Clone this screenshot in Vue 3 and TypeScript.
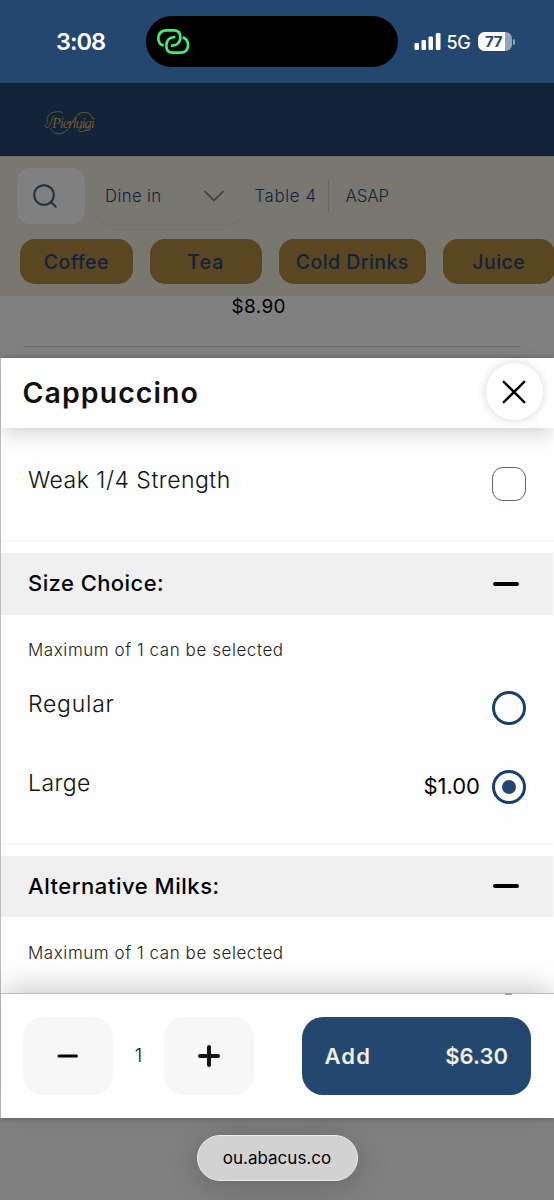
<script setup lang="ts">
import { ref } from 'vue'

interface Option {
  name: string
  price?: string
}

const categories = [
  { label: 'Coffee', cls: 'coffee' },
  { label: 'Tea', cls: 'tea' },
  { label: 'Cold Drinks', cls: 'cold' },
  { label: 'Juice', cls: 'juice' },
]
const sizes: Option[] = [{ name: 'Regular' }, { name: 'Large', price: '$1.00' }]
const selected = ref('Large')
const weak = ref(false)
const quantity = ref(1)
</script>

<template>
  <div class="screen">
    <header class="status">
      <span class="time">3:08</span>
      <div class="island">
        <svg width="34" height="28" viewBox="468 84 102 84" fill="none" stroke="#3df36a" stroke-width="8" stroke-linecap="butt">
          <path d="M491 137C479 134 475 124 475 115C475 100 484 92 498 91H523C536 92 541 101 541 112C541 128 530 138 513 137" />
          <path d="M548 112C560 116 564 126 564 136C564 150 555 158 541 158H516C504 157 499 148 499 137C499 122 508 111 526 111" />
        </svg>
      </div>
      <svg class="signal" width="27" height="18" viewBox="0 0 27 18" fill="#fff">
        <rect x="0.5" y="10" width="4.5" height="7" rx="1.3" />
        <rect x="7.5" y="7" width="4.5" height="10" rx="1.3" />
        <rect x="14.5" y="3.5" width="4.5" height="13.5" rx="1.3" />
        <rect x="21.8" y="0" width="4.7" height="17" rx="1.3" />
      </svg>
      <span class="net">5G</span>
      <div class="battery"><span>77</span></div>
      <i class="nub"></i>
    </header>

    <div class="brand">
      <div class="logo">
        <span>Pierluigi</span>
        <svg class="flourish" width="50" height="26" viewBox="0 0 50 26" fill="none" stroke="#6b5127" stroke-width="1">
          <path d="M10 6C6 12 7 17 3 17.5C0 17.5 1 14 3.5 14M4 13C1 8 5 3 11 2C14 1.4 17 1.5 19 3" />
          <path d="M6 18C9 24 16 26 22 21C29 15 30 3 40 2.3C45 2.3 48 5 48.5 9" />
          <path d="M45 15C44 20 40 22 36 21.5C33 21 34 19 37 18" />
        </svg>
      </div>
    </div>

    <section class="filters">
      <div class="controls">
        <div class="search">
          <svg width="26" height="26" viewBox="0 0 26 26" fill="none" stroke="#262f3f" stroke-width="2" stroke-linecap="round">
            <circle cx="12" cy="12" r="9.8" />
            <path d="M19 19L23.8 23.8" />
          </svg>
        </div>
        <div class="dropdown">
          <span class="t-dine">Dine in</span>
          <svg width="20" height="12" viewBox="0 0 20 12" fill="none" stroke="#444440" stroke-width="1.8" stroke-linecap="round" stroke-linejoin="round">
            <path d="M1 1.5L10 10.5L19 1.5" />
          </svg>
        </div>
        <span class="t-table">Table 4</span>
        <i class="divider"></i>
        <span class="t-asap">ASAP</span>
      </div>
      <nav class="chips">
        <button v-for="c in categories" :key="c.label" class="chip" :class="c.cls"><span>{{ c.label }}</span></button>
      </nav>
    </section>

    <div class="behind">
      <span>$8.90</span>
    </div>

    <main class="sheet">
      <div class="title-bar">
        <h1>Cappuccino</h1>
        <button class="close">
          <svg width="24" height="24" viewBox="0 0 24 24" fill="none" stroke="#000" stroke-width="2.4" stroke-linecap="round">
            <path d="M1.8 1.8L22.2 22.2M22.2 1.8L1.8 22.2" />
          </svg>
        </button>
      </div>

      <div class="scroll">
        <div class="row weak">
          <span class="name t-weak">Weak 1/4 Strength</span>
          <button class="check" @click="weak = !weak"></button>
        </div>
        <div class="band"><span class="t-size">Size Choice:</span><i></i></div>
        <p class="note">Maximum of 1 can be selected</p>
        <div v-for="s in sizes" :key="s.name" class="row size">
          <span class="name" :class="'t-' + s.name.toLowerCase()">{{ s.name }}</span>
          <span v-if="s.price" class="price">{{ s.price }}</span>
          <button class="radio" :class="{ on: selected === s.name }" @click="selected = s.name"></button>
        </div>
        <div class="band second"><span class="t-milk">Alternative Milks:</span><i></i></div>
        <p class="note">Maximum of 1 can be selected</p>
      </div>

      <div class="footer">
        <i class="peek"></i>
        <button class="step" @click="quantity = Math.max(1, quantity - 1)">
          <svg width="24" height="24" viewBox="0 0 24 24" stroke="#000" stroke-width="3" stroke-linecap="round"><path d="M3 12H20.4" /></svg>
        </button>
        <span class="qty">{{ quantity }}</span>
        <button class="step" @click="quantity++">
          <svg width="24" height="24" viewBox="0 0 24 24" stroke="#151515" stroke-width="4" stroke-linecap="round"><path d="M3 12H21M12 3V21" /></svg>
        </button>
        <button class="add"><span class="t-add">Add</span><span class="t-total">$6.30</span></button>
      </div>
    </main>

    <div class="browser"><div class="url"><span>ou.abacus.co</span></div></div>
  </div>
</template>

<style>
html, body { margin: 0; background: #808080; }
</style>

<style scoped>
.screen {
  width: 554px; height: 1200px; overflow: hidden; background: #808080;
  font-family: Inter, "Noto Sans", sans-serif; color: #111;
  display: flex; flex-direction: column;
}
.screen *, .screen { box-sizing: border-box; }
button { border: 0; padding: 0; margin: 0; font: inherit; color: inherit; background: none; flex: none; }
span { white-space: nowrap; }
svg { display: block; flex: none; }

.status { height: 83px; flex: none; background: #23476f; display: flex; align-items: center; color: #fff; }
.time { width: 89.5px; margin-left: 56px; font-size: 23.5px; font-weight: 600; letter-spacing: -1px; }
.island { width: 252.5px; height: 51.5px; border-radius: 26px; background: #000; padding-left: 10.5px; display: flex; align-items: center; }
.signal { margin-left: 16px; }
.net { margin-left: 5.5px; width: 31.5px; font-size: 18px; font-weight: 500; letter-spacing: -0.4px; margin-top: 1px; }
.battery {
  width: 34px; height: 19px; border-radius: 6.5px; flex: none;
  background: linear-gradient(90deg, #fff 26.5px, #95a4b8 26.5px);
  color: #23476f; font-size: 15px; font-weight: 700; line-height: 19px; padding-left: 7px; letter-spacing: -0.3px;
}
.nub { width: 2px; height: 6px; margin-left: 1px; background: #95a4b8; border-radius: 0 2px 2px 0; }

.brand { height: 73px; flex: none; background: #112338; padding: 27px 0 0 44px; border-bottom: 1px solid #001c3a; }
.logo { position: relative; width: 50px; height: 26px; color: #745729; }
.logo span { display: block; padding-left: 8px; font: italic 14.5px/26px "Liberation Serif", serif; letter-spacing: -1.1px; }
.flourish { position: absolute; left: 0; top: 0; }

.filters { height: 139.5px; flex: none; background: #787770; padding-top: 11.5px; color: #0f2340; }
.controls { display: flex; align-items: center; height: 57px; padding-left: 17px; font-size: 16.8px; font-weight: 300; }
.controls span { position: relative; top: -0.5px; }
.search { width: 68px; height: 56.5px; border-radius: 13px; background: #808080; padding: 0 0 0 15px; display: flex; align-items: center; }
.dropdown {
  margin-left: 8.5px; width: 149px; height: 57px; border-radius: 17px; padding: 0 19px 0 11.5px;
  display: flex; align-items: center; justify-content: space-between; box-shadow: 0 1px 2px rgba(0, 0, 0, 0.06);
}
.t-dine { letter-spacing: 0.35px; }
.t-table { margin-left: 12px; width: 73.5px; letter-spacing: 0.65px; }
.divider { width: 1px; height: 32px; background: #696864; }
.t-asap { margin-left: 16.5px; letter-spacing: -0.1px; }
.chips { display: flex; gap: 17px; margin-top: 14.5px; padding-left: 20px; font-size: 19.5px; font-weight: 500; }
.chip { height: 45px; width: 112.5px; border-radius: 15px; background: #5a4620; text-align: center; }
.chip span { letter-spacing: 0.45px; }
.chip.tea span { letter-spacing: 1px; }
.cold { width: 146.5px; }

.behind { height: 62.5px; flex: none; position: relative; padding-left: 231.5px; font-size: 19px; line-height: 22px; color: #000; letter-spacing: 0.35px; }
.behind::after { content: ""; position: absolute; left: 23px; width: 498px; top: 50.5px; height: 1px; background: #6b6b6b; }

.sheet { height: 760px; flex: none; background: #fefefe; border-left: 1px solid #bdbdbd; box-shadow: 0 0 6px rgba(0, 0, 0, 0.25); display: flex; flex-direction: column; }
.title-bar { height: 70px; flex: none; position: relative; z-index: 1; background: #fff; box-shadow: 0 8px 18px -2px rgba(0, 0, 0, 0.17); display: flex; align-items: center; justify-content: space-between; padding: 0 11.5px 3px 21.5px; }
h1 { margin: 4px 0 0; font-size: 28.5px; font-weight: 600; line-height: 1.2; letter-spacing: 1.05px; }
.close { width: 57px; height: 57px; border-radius: 50%; background: #fff; box-shadow: 0 0 10px rgba(0, 0, 0, 0.17); display: flex; align-items: center; justify-content: center; }

.scroll { height: 565px; flex: none; overflow: hidden; }
.row { display: flex; align-items: center; padding: 0 28px 0 27px; }
.name { font-size: 23px; font-weight: 300; flex: 1; position: relative; top: -3.5px; }
.t-weak { letter-spacing: 0.5px; top: -4px; }
.t-regular { letter-spacing: 0.75px; }
.t-large { letter-spacing: 0.4px; }
.weak { height: 114px; border-bottom: 2px solid #f7f7f7; }
.check { width: 34px; height: 34px; border: 1.7px solid #6b6468; border-radius: 11px; }
.band { height: 61.5px; margin: 11px 1px 0 0; background: #f0f0f0; display: flex; align-items: center; justify-content: space-between; padding: 0 34.5px 0 27px; font-size: 22px; font-weight: 500; color: #000; }
.band span { position: relative; top: -0.5px; }
.t-size { letter-spacing: 0.43px; }
.t-milk { letter-spacing: 0.53px; }
.band i { width: 26px; height: 4px; border-radius: 2px; background: #000; }
.note { margin: 35.5px 0 0 27px; height: 18px; line-height: 0; font-size: 17px; font-weight: 300; letter-spacing: 0.56px; color: #222; }
.size { height: 79px; }
.price { font-size: 22px; color: #000; margin-right: 12px; font-weight: 400; position: relative; top: -1px; }
.radio { width: 34px; height: 34px; border: 3px solid #153f70; border-radius: 50%; display: flex; align-items: center; justify-content: center; }
.radio.on::after { content: ""; width: 14px; height: 14px; border-radius: 50%; background: #23476f; }
.second { margin-top: 29.5px; position: relative; }
.second::before { content: ""; position: absolute; left: 0; right: 0; top: -13px; height: 2px; background: #f7f7f7; }

.footer { height: 125px; flex: none; position: relative; background: #fff; border-top: 1px solid #bdbdc0; box-shadow: 0 -8px 26px -4px rgba(0, 0, 0, 0.22); display: flex; align-items: center; padding: 0 23px 0 22px; }
.footer span { position: relative; top: -0.5px; }
.peek { position: absolute; left: 504px; top: -1px; width: 7px; height: 1.5px; background: #9b9ba8; border-radius: 2px; }
.step { width: 90px; height: 78.5px; border-radius: 21px; background: #f7f7f7; display: flex; align-items: center; justify-content: center; }
.qty { width: 51px; text-align: center; font-size: 19px; font-weight: 300; }
.add { width: 229px; height: 78.5px; margin-left: auto; border-radius: 21px; background: #23476f; color: #f1eee2; font-size: 22px; font-weight: 600; display: flex; align-items: center; justify-content: space-between; padding: 0 23px 0 22.5px; }
.t-add { letter-spacing: 1.2px; }

.browser { height: 82px; flex: none; display: flex; justify-content: center; padding-top: 17px; }
.url { width: 161px; height: 45.5px; border-radius: 23px; background: #d2d2d2; border: 1.5px solid #ececec; box-shadow: 0 4px 32px rgba(0, 0, 0, 0.2); display: flex; align-items: center; justify-content: center; font-size: 17px; color: #000; }
</style>
